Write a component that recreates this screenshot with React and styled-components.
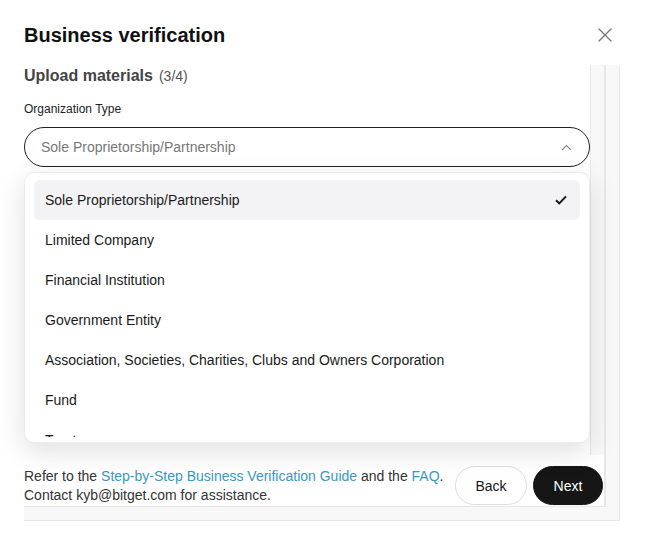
import React from 'react';
import styled, { createGlobalStyle } from 'styled-components';

const GlobalStyle = createGlobalStyle`
  html, body {
    margin: 0;
    padding: 0;
    background: #fff;
  }
  * {
    box-sizing: border-box;
  }
  body {
    font-family: 'Liberation Sans', Arial, Helvetica, sans-serif;
    color: #222;
  }
`;

const Modal = styled.div`
  width: 646px;
  height: 553px;
  padding: 21px 27px 0 24px;
  display: flex;
  flex-direction: column;
`;

const Header = styled.div`
  display: flex;
  align-items: center;
  justify-content: space-between;
  height: 28px;
  margin-bottom: 16px;
`;

const Title = styled.h1`
  margin: 0;
  font-size: 20px;
  line-height: 28px;
  font-weight: bold;
  color: #111;
`;

const CloseButton = styled.button`
  width: 20px;
  height: 20px;
  padding: 0;
  margin-right: 4px;
  border: none;
  background: none;
  display: flex;
  align-items: center;
  justify-content: center;
  cursor: pointer;
`;

const Panel = styled.div`
  width: 596px;
  height: 456px;
  display: grid;
  grid-template-columns: 581px 14px;
  grid-template-rows: 442px 13px;
  background: #f8f8f8;
  border-right: 1px solid #e6e6e6;
  border-bottom: 1px solid #e6e6e6;
`;

const Content = styled.div`
  display: flex;
  flex-direction: column;
  background: #fff;
  border-right: 1px solid #e6e6e6;
  border-bottom: 1px solid #e6e6e6;
`;

const Body = styled.div`
  display: grid;
  grid-template-columns: 566px 14px;
  height: 390px;
`;

const Track = styled.div`
  background: #f8f8f8;
  border-left: 1px solid #e8e8e8;
`;

const Form = styled.div`
  position: relative;
  display: flex;
  flex-direction: column;
`;

const Section = styled.h2`
  margin: 0;
  padding-top: 1px;
  font-size: 16px;
  line-height: 20px;
  font-weight: bold;
  color: #444;

  span {
    margin-left: 6px;
    font-size: 14px;
    font-weight: normal;
    color: #555;
  }
`;

const Label = styled.div`
  margin-top: 14px;
  font-size: 12px;
  line-height: 18px;
  color: #222;
`;

const Select = styled.div`
  margin-top: 9px;
  height: 40px;
  border: 1px solid #222;
  border-radius: 20px;
  padding: 0 17px 0 16px;
  display: flex;
  align-items: center;
  justify-content: space-between;
  font-size: 14px;
  color: #777;
`;

const Dropdown = styled.div`
  position: absolute;
  top: 107px;
  left: 0;
  right: 0;
  height: 271px;
  padding: 7px 9px 5px;
  background: #fff;
  border: 1px solid #ececec;
  border-radius: 10px;
  box-shadow: 0 8px 28px rgba(0, 0, 0, 0.13);
`;

const OptionList = styled.ul`
  height: 100%;
  margin: 0;
  padding: 0;
  list-style: none;
  overflow: hidden;
`;

const Option = styled.li`
  height: 40px;
  padding: 0 13px 0 11px;
  display: flex;
  align-items: center;
  justify-content: space-between;
  border-radius: 6px;
  font-size: 14px;
  color: #1a1a1a;
  background: ${(p) => (p.$selected ? '#f3f3f5' : 'transparent')};
`;

const Footer = styled.div`
  flex: 1;
  display: flex;
  align-items: flex-end;
  justify-content: space-between;
  padding: 0 1px 1px 0;
`;

const Note = styled.p`
  margin: 0;
  font-size: 14px;
  line-height: 19px;
  color: #333;

  a {
    color: #3a97c1;
    text-decoration: none;
  }
`;

const Actions = styled.div`
  display: flex;
  gap: 6px;
`;

const Button = styled.button`
  height: 39px;
  padding: 0;
  width: ${(p) => (p.$primary ? '70px' : '72px')};
  border-radius: 20px;
  border: 1px solid ${(p) => (p.$primary ? '#161616' : '#dddddd')};
  background: ${(p) => (p.$primary ? '#161616' : '#fff')};
  color: ${(p) => (p.$primary ? '#fff' : '#161616')};
  font-family: inherit;
  font-size: 14px;
  cursor: pointer;
`;

const options = [
  'Sole Proprietorship/Partnership',
  'Limited Company',
  'Financial Institution',
  'Government Entity',
  'Association, Societies, Charities, Clubs and Owners Corporation',
  'Fund',
  'Trust',
];

export default function App() {
  return (
    <>
      <GlobalStyle />
      <Modal>
        <Header>
          <Title>Business verification</Title>
          <CloseButton aria-label="Close">
            <svg width="14" height="14" viewBox="0 0 14 14" fill="none">
              <path d="M1 1L13 13M13 1L1 13" stroke="#7a7a7a" strokeWidth="1.4" strokeLinecap="round" />
            </svg>
          </CloseButton>
        </Header>

        <Panel>
          <Content>
            <Body>
              <Form>
                <Section>
                  Upload materials<span>(3/4)</span>
                </Section>
                <Label>Organization Type</Label>
                <Select>
                  <span>Sole Proprietorship/Partnership</span>
                  <svg width="11" height="7" viewBox="0 0 11 7" fill="none">
                    <path d="M1 6L5.5 1.5L10 6" stroke="#8a8a8a" strokeWidth="1.2" />
                  </svg>
                </Select>
                <Dropdown>
                  <OptionList>
                    {options.map((o, i) => (
                      <Option key={o} $selected={i === 0}>
                        <span>{o}</span>
                        {i === 0 && (
                          <svg width="12" height="10" viewBox="0 0 12 10" fill="none">
                            <path d="M1 5.2L4.3 8.4L11 1.4" stroke="#161616" strokeWidth="2" />
                          </svg>
                        )}
                      </Option>
                    ))}
                  </OptionList>
                </Dropdown>
              </Form>
              <Track />
            </Body>

            <Footer>
              <Note>
                Refer to the <a href="#guide">Step-by-Step Business Verification Guide</a> and the{' '}
                <a href="#faq">FAQ</a>.
                <br />
                Contact kyb@bitget.com for assistance.
              </Note>
              <Actions>
                <Button>Back</Button>
                <Button $primary>Next</Button>
              </Actions>
            </Footer>
          </Content>
          <Track />
          <div />
          <div />
        </Panel>
      </Modal>
    </>
  );
}
